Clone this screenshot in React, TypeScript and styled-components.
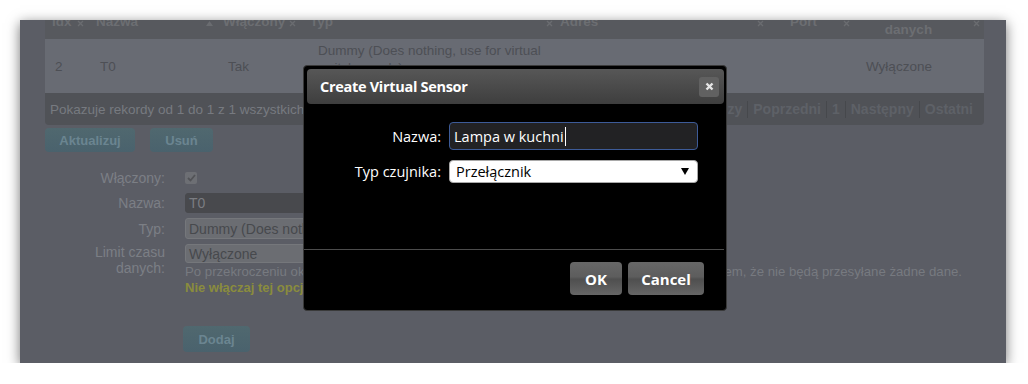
import React from "react";
import styled, { createGlobalStyle } from "styled-components";

const GlobalStyle = createGlobalStyle`
  html, body {
    margin: 0;
    background: #ffffff;
  }
  body {
    font-family: "Liberation Sans", Arial, sans-serif;
  }
`;

const Stage = styled.div`
  padding: 20px 0 0 20px;
`;

const Frame = styled.div`
  position: relative;
  width: 986px;
  height: 343px;
  overflow: hidden;
  background: #5b5d65;
  box-shadow: 0 3px 12px rgba(0, 0, 0, 0.55);
`;

/* dimmed page behind the dialog */
const Page = styled.div`
  margin-top: -20px;
  padding: 0 22px 0 25px;
  font-size: 13px;
`;

const Table = styled.div`
  width: 939px;
`;

const Grid = styled.div`
  display: grid;
  grid-template-columns: 44px 127px 87px 250px 230px 70px 131px;
`;

const HeadCell = styled.div`
  display: flex;
  align-items: center;
  height: 39px;
  padding: 3px 0 0 7px;
  box-sizing: border-box;
  background: #57595e;
  color: #6c6e72;
  font-weight: bold;
  font-size: 13.5px;
  line-height: 17px;
`;

const HeadLabel = styled.div<{ $w: number; $center?: boolean }>`
  width: ${(p) => p.$w}px;
  text-align: ${(p) => (p.$center ? "center" : "left")};
`;

const SortMark = styled.svg<{ $ml?: number }>`
  flex: none;
  margin-top: 4px;
  margin-left: ${(p) => p.$ml ?? 0}px;
`;

const DataCell = styled.div<{ $pl: number; $top?: boolean }>`
  display: flex;
  align-items: ${(p) => (p.$top ? "flex-start" : "center")};
  height: 54px;
  padding: ${(p) => (p.$top ? "3px" : "0")} 4px 0 ${(p) => p.$pl}px;
  box-sizing: border-box;
  background: #686b73;
  color: #4d4f55;
  font-size: 13.5px;
  line-height: 17px;
`;

const Footer = styled.div`
  display: flex;
  align-items: center;
  justify-content: space-between;
  height: 32px;
  padding: 0 11px 0 5px;
  background: #505257;
  border-radius: 0 0 4px 4px;
  color: #777a80;
  font-size: 13.5px;
`;

const Pager = styled.div`
  display: flex;
  align-items: center;
  font-weight: bold;
  font-size: 14px;
  color: #5e6167;
`;

const PageLink = styled.span<{ $first?: boolean }>`
  padding: 0 5px;
  line-height: 17px;
  border-left: ${(p) => (p.$first ? "none" : "1px solid #46484c")};
  &:last-child {
    padding-right: 0;
  }
`;

const ActionRow = styled.div`
  display: flex;
  gap: 15px;
  margin-top: 3px;
`;

const DimButton = styled.div<{ $w: number; $h?: number }>`
  display: flex;
  align-items: center;
  justify-content: center;
  width: ${(p) => p.$w}px;
  height: ${(p) => p.$h ?? 24}px;
  border-radius: 4px;
  background: linear-gradient(#50686f, #4a626d);
  color: #6b8591;
  font-weight: bold;
  font-size: 13px;
`;

const Form = styled.div`
  display: grid;
  grid-template-columns: 120px 1fr;
  column-gap: 20px;
  margin-top: 16px;
`;

const FormLabel = styled.div<{ $h: number; $top?: boolean }>`
  display: flex;
  align-items: ${(p) => (p.$top ? "flex-start" : "center")};
  justify-content: flex-end;
  min-height: ${(p) => p.$h}px;
  margin-bottom: 5px;
  text-align: right;
  color: #7c7f85;
  font-size: 14px;
  line-height: 16px;
`;

const FormField = styled.div<{ $h: number }>`
  display: flex;
  flex-direction: column;
  justify-content: center;
  min-height: ${(p) => p.$h}px;
  margin-bottom: 5px;
`;

const CheckBox = styled.div`
  width: 12px;
  height: 12px;
  border-radius: 2px;
  background: #6d6f74;
  display: flex;
  align-items: center;
  justify-content: center;
`;

const DimInput = styled.div<{ $w: number; $light?: boolean; $h: number }>`
  display: flex;
  align-items: center;
  width: ${(p) => p.$w}px;
  height: ${(p) => p.$h}px;
  padding-left: 3px;
  box-sizing: border-box;
  border-radius: 3px;
  background: ${(p) => (p.$light ? "#6b6d72" : "#48494d")};
  border: 1px solid ${(p) => (p.$light ? "#75777b" : "#48494d")};
  color: ${(p) => (p.$light ? "#47494d" : "#7b7d82")};
  font-size: 14px;
`;

const HelpText = styled.div`
  display: flex;
  width: 777px;
  margin-top: 1px;
  line-height: 16px;
  color: #777a80;
  font-size: 13.2px;
  white-space: pre;
`;

/* the rest of the sentence ends flush with the right edge; its start runs under the dialog */
const HelpTail = styled.span`
  flex: 1;
  min-width: 0;
  display: flex;
  justify-content: flex-end;
  overflow: hidden;
`;

const Warning = styled.div`
  line-height: 16px;
  color: #8a8c3d;
  font-weight: bold;
`;

const AddRow = styled.div`
  grid-column: 2;
  margin: 25px 0 0 -2px;
`;

/* the dialog */
const Dialog = styled.div`
  position: absolute;
  left: 283px;
  top: 45px;
  width: 424px;
  height: 246px;
  box-sizing: border-box;
  display: flex;
  flex-direction: column;
  background: #000;
  border: 1px solid #3a3a3a;
  border-radius: 4px;
  font-family: "Open Sans", "Noto Sans", sans-serif;
  color: #fff;
`;

const TitleBar = styled.div`
  display: flex;
  align-items: center;
  justify-content: space-between;
  height: 35px;
  margin: 3px 2px 0 3px;
  padding: 0 5px 0 13px;
  border-radius: 4px;
  background: linear-gradient(#575757, #3e3e3e);
`;

const Title = styled.div`
  font-size: 14.5px;
  font-weight: bold;
  letter-spacing: -0.3px;
`;

const CloseButton = styled.div`
  display: flex;
  align-items: center;
  justify-content: center;
  width: 20px;
  height: 20px;
  border-radius: 3px;
  background: #616161;
`;

const DialogBody = styled.div`
  flex: 1;
  padding-top: 18px;
`;

const DialogForm = styled.div`
  display: grid;
  grid-template-columns: 137px 249px;
  column-gap: 8px;
  row-gap: 10px;
  align-items: center;
`;

const DialogLabel = styled.div`
  text-align: right;
  font-size: 14.5px;
`;

const TextBox = styled.div`
  display: flex;
  align-items: center;
  height: 28px;
  padding-left: 4px;
  box-sizing: border-box;
  background: #222224;
  border: 1px solid #3d5b98;
  border-radius: 4px;
  font-size: 14.5px;
`;

const Caret = styled.span`
  display: inline-block;
  width: 1px;
  height: 19px;
  margin-left: 1px;
  background: #fff;
`;

const SelectBox = styled.div`
  display: flex;
  align-items: center;
  justify-content: space-between;
  height: 23px;
  padding: 0 8px 0 6px;
  box-sizing: border-box;
  background: #fff;
  border: 1px solid #a9a9a9;
  border-radius: 4px;
  color: #000;
  font-size: 14.5px;
`;

const Divider = styled.div`
  height: 1px;
  margin-right: 2px;
  background: #4c4c4c;
`;

const ButtonPane = styled.div`
  display: flex;
  justify-content: flex-end;
  gap: 6px;
  padding: 12px 22px 15px 0;
`;

const DialogButton = styled.div<{ $w: number }>`
  display: flex;
  align-items: center;
  justify-content: center;
  width: ${(p) => p.$w}px;
  height: 33px;
  box-sizing: border-box;
  border-radius: 4px;
  background: linear-gradient(
    #676767 0%,
    #5d5d5d 45%,
    #4f4f4f 52%,
    #5a5a5a 75%,
    #666666 100%
  );
  font-size: 15px;
  font-weight: bold;
`;

function SortIcon({ ml }: { ml?: number }) {
  return (
    <SortMark $ml={ml} width="7" height="7" viewBox="0 0 7 7">
      <path d="M1 1 L6 6 M6 1 L1 6" stroke="#6a6c70" strokeWidth="1.4" />
    </SortMark>
  );
}

function SortUp() {
  return (
    <SortMark width="9" height="7" viewBox="0 0 9 7">
      <path d="M4.5 1 L8 6 L1 6 Z" fill="#6a6c70" />
    </SortMark>
  );
}

const headers = [
  { label: "Idx", w: 25 },
  { label: "Nazwa", w: 109, active: true },
  { label: "Włączony", w: 66 },
  { label: "Typ", w: 237 },
  { label: "Adres", w: 197 },
  { label: "Port", w: 53 },
];

export default function App() {
  return (
    <>
      <GlobalStyle />
      <Stage>
        <Frame>
          <Page>
            <Table>
              <Grid>
                {headers.map((h) => (
                  <HeadCell key={h.label}>
                    <HeadLabel $w={h.w}>{h.label}</HeadLabel>
                    {h.active ? <SortUp /> : <SortIcon />}
                  </HeadCell>
                ))}
                <HeadCell>
                  <HeadLabel $w={97} $center>
                    Limit czasu
                    <br />
                    danych
                  </HeadLabel>
                  <SortIcon ml={16} />
                </HeadCell>

                <DataCell $pl={10}>2</DataCell>
                <DataCell $pl={11}>T0</DataCell>
                <DataCell $pl={12}>Tak</DataCell>
                <DataCell $pl={15} $top>
                  Dummy (Does nothing, use for virtual switches only)
                </DataCell>
                <DataCell $pl={10}></DataCell>
                <DataCell $pl={10}></DataCell>
                <DataCell $pl={13}>Wyłączone</DataCell>
              </Grid>
              <Footer>
                <span>Pokazuje rekordy od 1 do 1 z 1 wszystkich</span>
                <Pager>
                  <PageLink $first>Pierwszy</PageLink>
                  <PageLink>Poprzedni</PageLink>
                  <PageLink>1</PageLink>
                  <PageLink>Następny</PageLink>
                  <PageLink>Ostatni</PageLink>
                </Pager>
              </Footer>
            </Table>

            <ActionRow>
              <DimButton $w={90}>Aktualizuj</DimButton>
              <DimButton $w={63}>Usuń</DimButton>
            </ActionRow>

            <Form>
              <FormLabel $h={20}>Włączony:</FormLabel>
              <FormField $h={20}>
                <CheckBox>
                  <svg width="9" height="8" viewBox="0 0 9 8">
                    <path
                      d="M1 4 L3.5 6.5 L8 1"
                      stroke="#525357"
                      strokeWidth="1.8"
                      fill="none"
                    />
                  </svg>
                </CheckBox>
              </FormField>

              <FormLabel $h={20}>Nazwa:</FormLabel>
              <FormField $h={20}>
                <DimInput $w={300} $h={20}>
                  T0
                </DimInput>
              </FormField>

              <FormLabel $h={21}>Typ:</FormLabel>
              <FormField $h={21}>
                <DimInput $w={400} $h={21} $light>
                  Dummy (Does nothing, use for virtual switches only)
                </DimInput>
              </FormField>

              <FormLabel $h={19} $top>
                Limit czasu
                <br />
                danych:
              </FormLabel>
              <FormField $h={19}>
                <DimInput $w={200} $h={19} $light>
                  Wyłączone
                </DimInput>
                <HelpText>
                  <span>Po przekroczeniu określonego czasu </span>
                  <HelpTail>
                    <span>
                      bez danych czujnik zostanie oznaczony, co będzie sygnałem, że nie będą
                      przesyłane żadne dane.
                    </span>
                  </HelpTail>
                </HelpText>
                <Warning>Nie włączaj tej opcji dla przełączników!</Warning>
              </FormField>

              <AddRow>
                <DimButton $w={67} $h={26}>
                  Dodaj
                </DimButton>
              </AddRow>
            </Form>
          </Page>

          <Dialog>
            <TitleBar>
              <Title>Create Virtual Sensor</Title>
              <CloseButton>
                <svg width="9" height="9" viewBox="0 0 9 9">
                  <path
                    d="M1.5 1.5 L7.5 7.5 M7.5 1.5 L1.5 7.5"
                    stroke="#e6e6e6"
                    strokeWidth="2.4"
                  />
                </svg>
              </CloseButton>
            </TitleBar>
            <DialogBody>
              <DialogForm>
                <DialogLabel>Nazwa:</DialogLabel>
                <TextBox>
                  Lampa w kuchni
                  <Caret />
                </TextBox>
                <DialogLabel>Typ czujnika:</DialogLabel>
                <SelectBox>
                  <span>Przełącznik</span>
                  <svg width="8" height="7" viewBox="0 0 8 7">
                    <path d="M0 0 L8 0 L4 7 Z" fill="#000" />
                  </svg>
                </SelectBox>
              </DialogForm>
            </DialogBody>
            <Divider />
            <ButtonPane>
              <DialogButton $w={52}>OK</DialogButton>
              <DialogButton $w={76}>Cancel</DialogButton>
            </ButtonPane>
          </Dialog>
        </Frame>
      </Stage>
    </>
  );
}
